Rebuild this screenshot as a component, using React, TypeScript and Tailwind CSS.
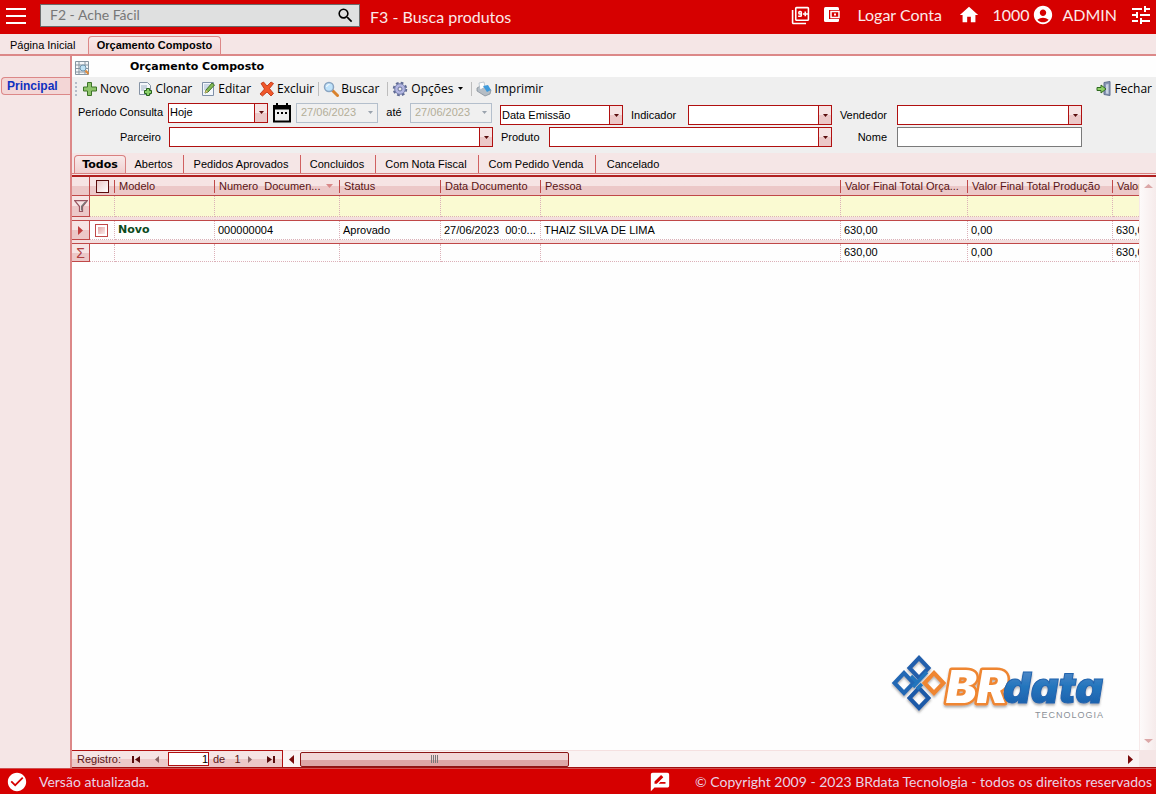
import type { ReactNode } from "react";
import {
  MdAccountCircle,
  MdCheckCircle,
  MdFilter9Plus,
  MdHome,
  MdRateReview,
  MdSearch,
  MdTune,
} from "react-icons/md";

const ui = "font-['Liberation_Sans',sans-serif] text-[11px]";
const gloss = "bg-linear-to-b from-[#f6e4e4] from-50% to-[#ecc8c8] to-50%";

const statusTabs = [
  { label: "Abertos", width: "w-[58px]" },
  { label: "Pedidos Aprovados", width: "w-[117px]" },
  { label: "Concluidos", width: "w-[75px]" },
  { label: "Com Nota Fiscal", width: "w-[103px]" },
  { label: "Com Pedido Venda", width: "w-[117px]" },
  { label: "Cancelado", width: "w-[76px]" },
];

const columns = [
  { label: "Modelo", width: "w-[100px]" },
  { label: "Numero  Documen...", width: "w-[125px]", sorted: true },
  { label: "Status", width: "w-[101px]" },
  { label: "Data Documento", width: "w-[100px]" },
  { label: "Pessoa", width: "w-[300px]" },
  { label: "Valor Final Total Orça...", width: "w-[127px]" },
  { label: "Valor Final Total Produção", width: "w-[145px]" },
  { label: "Valor", width: "", clipped: true },
];

const record = ["Novo", "000000004", "Aprovado", "27/06/2023  00:0...", "THAIZ SILVA DE LIMA", "630,00", "0,00", "630,00"];
const totals = ["", "", "", "", "", "630,00", "0,00", "630,00"];

function Combo({ id, label, options, className = "", disabled }: {
  id: string;
  label: string;
  options: string[];
  className?: string;
  disabled?: boolean;
}) {
  return (
    <div className={`relative h-5 ${className}`}>
      <select
        id={id}
        aria-label={label}
        disabled={disabled}
        className={`${ui} h-full w-full appearance-none border pr-4 ${
          disabled ? "border-[#b4bfcc] bg-[#f0f0f0] pl-1 text-[#b3ae98] opacity-100" : "border-[#b01010] bg-white pl-px text-black"
        }`}
      >
        {options.map((o) => (
          <option key={o}>{o}</option>
        ))}
      </select>
      <span
        className={`pointer-events-none absolute inset-y-px right-px flex w-[13px] items-center justify-center ${
          disabled ? "" : `border-l border-[#b01010] ${gloss}`
        }`}
      >
        <svg width="5" height="3" viewBox="0 0 5 3">
          <path d="M0 0h5L2.5 3z" fill={disabled ? "#9aa3ad" : "#5a0c0c"} />
        </svg>
      </span>
    </div>
  );
}

function ToolButton({ label, children }: { label: string; children: ReactNode }) {
  return (
    <button type="button" className="flex items-center gap-[2px] whitespace-nowrap">
      <svg width="16" height="16" viewBox="0 0 16 16">{children}</svg>
      {label}
    </button>
  );
}

function Separator() {
  return <span className="mx-1 h-[14px] w-px bg-[#bdbdbd]" />;
}

function Triangle({ points, color }: { points: string; color: string }) {
  return (
    <svg width="9" height="9" viewBox="0 0 9 9">
      <path d={points} fill={color} />
    </svg>
  );
}

function TopBar() {
  return (
    <header className="flex h-[34px] shrink-0 items-center bg-[#d60000] font-[Lato,sans-serif] text-base text-[#fbe9e9]">
      <button type="button" aria-label="Menu" className="flex w-10 flex-col gap-[5px] pb-[3px] pl-[6px]">
        <span className="h-[2px] w-5 bg-white" />
        <span className="h-[2px] w-5 bg-white" />
        <span className="h-[2px] w-5 bg-white" />
      </button>
      <div className="mb-1 flex h-[23px] w-80 items-center border border-[#6b6b6b] bg-[#dfe0e0] pl-[9px] pr-1">
        <input
          aria-label="Ache Fácil"
          placeholder="F2 - Ache Fácil"
          className="min-w-0 flex-1 bg-transparent text-sm text-black outline-none placeholder:text-[#777]"
        />
        <MdSearch className="size-[19px] text-black" />
      </div>
      <a href="#produtos" className="ml-[10px]">F3 - Busca produtos</a>
      <div className="ml-auto flex items-center pb-1">
        <MdFilter9Plus className="size-[19px] text-white" />
        <svg width="17" height="16" viewBox="0 0 17 16" className="ml-[14px]">
          <rect y="0" width="15" height="15" rx="1.500" fill="#fff" />
          <path d="M5 3h12v9H5z" fill="#d60000" />
          <path d="M7 4.500h8v6H7z" fill="none" stroke="#fff" strokeWidth="1.500" />
          <path d="M10 6.500h2v2h-2z" fill="#fff" />
        </svg>
        <a href="#conta" className="ml-4 w-[101px]">Logar Conta</a>
        <MdHome className="size-[22px] text-white" />
        <span className="ml-3 w-10">1000</span>
        <MdAccountCircle className="size-[22px] text-white" />
        <span className="ml-2">ADMIN</span>
        <MdTune className="ml-3 mr-[3px] size-6 text-white" />
      </div>
    </header>
  );
}

function Toolbar() {
  return (
    <div className="flex h-[23px] items-center bg-[#efefef] pl-[3px] pr-1 font-['Open_Sans',sans-serif] text-xs text-black">
      <span className="mr-[5px] h-[14px] border-l-2 border-dotted border-[#b5bcc8]" />
      <div className="flex items-center gap-2">
        <ToolButton label="Novo">
          <path d="M5.500 1.500h4v4.500h5v4h-5v4.500h-4V10h-4V6h4z" fill="#8fc46c" stroke="#3c7427" />
        </ToolButton>
        <ToolButton label="Clonar">
          <path d="M2.500 1.500h8l3 3v9h-11z" fill="#f5f7fa" stroke="#8593a5" />
          <path d="M4 5h6M4 7h6M4 9h3" stroke="#9fb0c4" />
          <path d="M9.500 7.500h3v2h2v3h-2v2h-3v-2h-2v-3h2z" fill="#8bd06a" stroke="#26611c" />
        </ToolButton>
        <ToolButton label="Editar">
          <path d="M2.500 1.500h11v13h-11z" fill="#f3f6fb" stroke="#7f90a8" />
          <path d="M4 4h6M4 6h5M4 8h4" stroke="#a4b7d0" />
          <path d="M5 12l1-3 6-7 2.500 2L8 11z" fill="#83b954" stroke="#40722c" />
          <path d="M5 12l1-3 2 2z" fill="#e7c37a" />
        </ToolButton>
        <ToolButton label="Excluir">
          <path d="M2 2.500L4.500 1 8 5l4-4 2.500 1.500L10.500 7.500l4 5L12 15l-4-4-4.500 4L1 13l4.500-5z" fill="#f0572a" stroke="#b82c0d" strokeWidth=".8" />
        </ToolButton>
      </div>
      <Separator />
      <ToolButton label="Buscar">
        <path d="M9.500 9.500l5 5" stroke="#d9822e" strokeWidth="3" strokeLinecap="round" />
        <circle cx="6" cy="6" r="4.500" fill="#bfe3fb" stroke="#8aa5c2" strokeWidth="1.500" />
        <path d="M3.500 6a3 3 0 0 1 3-2.500" stroke="#fff" fill="none" />
      </ToolButton>
      <span className="w-1" />
      <Separator />
      <button type="button" className="flex items-center gap-[3px]">
        <svg width="16" height="16" viewBox="0 0 16 16">
          <circle cx="8" cy="8" r="6" fill="none" stroke="#5f6a93" strokeWidth="2.500" strokeDasharray="2.600 2.110" />
          <circle cx="8" cy="8" r="5.300" fill="#b3b6e2" stroke="#7680ab" />
          <circle cx="8" cy="8" r="2" fill="#efefef" stroke="#69739c" />
        </svg>
        Opções
        <svg width="5" height="3" viewBox="0 0 5 3" className="ml-[2px]">
          <path d="M0 0h5L2.500 3z" />
        </svg>
      </button>
      <span className="w-1" />
      <Separator />
      <ToolButton label="Imprimir">
        <path d="M1 7l5-3 9 5-1 4-5 2-8-5z" fill="#b5bdc5" stroke="#7c8790" strokeWidth=".7" />
        <path d="M3 2l5-1 1 5-5 3z" fill="#fff" stroke="#a7b4c0" strokeWidth=".7" />
        <path d="M7 5l5-1 3 5-4 2z" fill="#3f9bdc" />
      </ToolButton>
      <div className="ml-auto">
        <ToolButton label="Fechar">
          <path d="M8 1.500l6-1v14l-6-1z" fill="#8795b5" stroke="#62718f" />
          <path d="M10 3.500l2.500-.5v10L10 12.500z" fill="#c9d3e4" />
          <path d="M1 6.500h4V4l5 4-5 4V9.500H1z" fill="#8fd067" stroke="#2f6a20" />
        </ToolButton>
      </div>
    </div>
  );
}

function Filters() {
  return (
    <form className={`${ui} flex flex-col gap-[2px] bg-[#efefef] pb-[6px] pt-[2px] text-black`}>
      <div className="flex h-[23px]">
        <div className="flex h-[21px] w-[421px] items-center">
          <label htmlFor="periodo" className="w-24 pr-[5px] text-right">Período Consulta</label>
          <Combo id="periodo" label="Período" options={["Hoje"]} className="w-[100px]" />
          <svg width="18" height="20" viewBox="0 0 18 20" className="mx-[5px]">
            <path d="M1 5.500h16v13H1z" fill="none" stroke="#000" strokeWidth="2" />
            <path d="M0 2h18v4H0zM3 0h2v3H3zM13 0h2v3h-2zM4 9h2v2H4zM8 9h2v2H8zM12 9h2v2h-2z" />
          </svg>
          <Combo id="inicio" label="Data inicial" options={["27/06/2023"]} className="w-[82px]" disabled />
          <span className="w-8 text-center">até</span>
          <Combo id="fim" label="Data final" options={["27/06/2023"]} className="w-[82px]" disabled />
        </div>
        <div className="flex h-5 items-center self-end pl-[7px]">
          <Combo id="tipo" label="Tipo de data" options={["Data Emissão"]} className="w-[123px]" />
          <label htmlFor="indicador" className="w-[65px] pl-2">Indicador</label>
          <Combo id="indicador" label="Indicador" options={[""]} className="w-36" />
          <label htmlFor="vendedor" className="w-[65px] pr-[10px] text-right">Vendedor</label>
          <Combo id="vendedor" label="Vendedor" options={[""]} className="w-[185px]" />
        </div>
      </div>
      <div className="flex h-5 items-center">
        <label htmlFor="parceiro" className="w-[97px] pr-2 text-right">Parceiro</label>
        <Combo id="parceiro" label="Parceiro" options={[""]} className="w-[324px]" />
        <label htmlFor="produto" className="w-14 pl-2">Produto</label>
        <Combo id="produto" label="Produto" options={[""]} className="w-[283px]" />
        <label htmlFor="nome" className="w-[65px] pr-[10px] text-right">Nome</label>
        <input id="nome" className="h-5 w-[185px] border border-[#7a7a7a] bg-white px-1" />
      </div>
    </form>
  );
}

function StatusTabs() {
  return (
    <nav className={`${ui} flex h-[21px] items-end border-b border-[#d98080] bg-[#f5e6e6] pl-[2px] text-black`}>
      <button
        type="button"
        className="h-[18px] w-[52px] rounded-t border border-b-0 border-[#d98080] bg-linear-to-b from-[#f8eaea] to-[#f0cfcf] font-['DejaVu_Sans',sans-serif] font-bold leading-4"
      >
        Todos
      </button>
      {statusTabs.map((tab, i) => (
        <button
          key={tab.label}
          type="button"
          className={`h-[18px] pr-[2px] ${tab.width} ${i < statusTabs.length - 1 ? "border-r border-[#d06060]" : ""}`}
        >
          {tab.label}
        </button>
      ))}
    </nav>
  );
}

function RowHead({ children }: { children?: ReactNode }) {
  return (
    <th className={`border-b border-r border-[#c04848] p-0 ${gloss}`}>
      <div className="flex items-center justify-center">{children}</div>
    </th>
  );
}

const cell = "overflow-hidden border-b border-r border-dotted border-[#dcb0b8] p-0 pl-[3px] last:border-r-0";

function Divider() {
  return (
    <tr>
      <td colSpan={10} className="h-1 border-b border-[#c04848] bg-[#f3dede] p-0" />
    </tr>
  );
}

function Grid() {
  return (
    <table className={`${ui} w-full table-fixed border-separate border-spacing-0 whitespace-pre text-black`}>
      <thead>
        <tr className={`h-[19px] text-[#5a1414] ${gloss}`}>
          <th className="w-[18px] border-b border-r border-[#c04848] p-0" />
          <th className="w-[25px] border-b border-[#c04848] p-0">
            <div className="flex h-[13px] items-center justify-center border-r border-[#c04848]">
              <input type="checkbox" aria-label="Selecionar todos" className="size-[13px] appearance-none border border-[#5a0c0c] bg-linear-to-br from-[#e8c8c8] to-white" />
            </div>
          </th>
          {columns.map((col) => (
            <th key={col.label} className={`${col.width} overflow-hidden border-b border-[#c04848] p-0 text-left font-normal`}>
              <div className={`flex h-[13px] items-center border-[#c04848] pl-1 ${col.clipped ? "" : "border-r"}`}>
                <span>{col.label}</span>
                {col.sorted && (
                  <svg width="7" height="4" viewBox="0 0 7 4" className="ml-auto mr-[6px] shrink-0">
                    <path d="M0 0h7L3.500 4z" fill="#d98888" />
                  </svg>
                )}
              </div>
            </th>
          ))}
        </tr>
      </thead>
      <tbody>
        <tr className="h-[21px] bg-[#fafad2]">
          <RowHead>
            <svg width="14" height="12" viewBox="0 0 14 12">
              <path d="M.7.7h12.600L8.500 6.500v5h-3v-5z" fill="#f6e4e4" stroke="#9a5560" strokeWidth="1.200" />
              <path d="M13.300.7L8.500 6.500v5L7 10V6l3.500-4z" fill="#777" />
            </svg>
          </RowHead>
          {Array.from({ length: 9 }, (_, i) => (
            <td key={i} className={cell} />
          ))}
        </tr>
        <Divider />
        <tr className="h-[19px]">
          <RowHead>
            <Triangle points="M2 0v9l5-4.500z" color="#c04040" />
          </RowHead>
          <td className={cell}>
            <input type="checkbox" aria-label="Selecionar Novo" className="ml-[2px] block size-[13px] appearance-none border border-[#c04848] bg-linear-to-br from-[#d99090] to-white outline-2 -outline-offset-3 outline-white" />
          </td>
          {record.map((value, i) => (
            <td key={i} className={`${cell} ${i === 0 ? "font-['DejaVu_Sans',sans-serif] font-bold text-[#0b4a1c]" : ""}`}>
              {value}
            </td>
          ))}
        </tr>
        <Divider />
        <tr className="h-[18px]">
          <RowHead>
            <span className="font-['Liberation_Sans',sans-serif] text-sm font-normal leading-4 text-[#b04040]">Σ</span>
          </RowHead>
          <td className={cell} />
          {totals.map((value, i) => (
            <td key={i} className={cell}>{value}</td>
          ))}
        </tr>
      </tbody>
    </table>
  );
}

function Logo() {
  return (
    <svg width="216" height="68" viewBox="0 0 216 68" role="img" aria-label="BRdata Tecnologia">
      <defs>
        <linearGradient id="blue" x1="0" y1="0" x2="0" y2="1">
          <stop offset="0" stopColor="#6a93cc" />
          <stop offset=".5" stopColor="#2375bd" />
          <stop offset="1" stopColor="#1a57a4" />
        </linearGradient>
        <filter id="shade" x="-10%" y="-10%" width="120%" height="130%">
          <feDropShadow dx="0" dy="2" stdDeviation="1" floodColor="#555" floodOpacity=".45" />
        </filter>
      </defs>
      <g filter="url(#shade)" fill="none" strokeWidth="4">
        <path d="M43 19l9.500 10L43 39 33.500 29z" stroke="#ef8630" />
        <path d="M28 4l9.500 10L28 24l-9.500-10z" stroke="#215fac" />
        <path d="M13 19l9.500 10L13 39 3.500 29z" stroke="#2468b4" />
        <path d="M28 34l9.500 10L28 54l-9.500-10z" stroke="#1f5aa8" />
        <path d="M20 22l6 6M36 18L22 33M26 35l5-5" stroke="#2375bd" strokeWidth="3.500" />
      </g>
      <g fontFamily="Inter, sans-serif" fontStyle="italic" fontWeight="900" filter="url(#shade)">
        <text x="55" y="49" fontSize="46" fill="#fff" stroke="#ef8630" strokeWidth="5" strokeLinejoin="round" paintOrder="stroke">BR</text>
        <text x="112" y="49" fontSize="43" fill="url(#blue)" stroke="#2064ae" strokeWidth="1">data</text>
      </g>
      <text x="144" y="64" fontFamily="Liberation Sans, sans-serif" fontSize="9" letterSpacing="1" fill="#8a9097">TECNOLOGIA</text>
    </svg>
  );
}

function RecordNavigator() {
  return (
    <div className={`${ui} flex h-[18px] border-b border-[#a01010] bg-[#faf3f3] text-[#5a1414]`}>
      <div className={`flex w-[211px] items-center border border-b-0 border-l-0 border-[#b01010] pl-[5px] ${gloss}`}>
        <label htmlFor="registro" className="w-[55px]">Registro:</label>
        <button type="button" aria-label="Primeiro" className="w-5">
          <Triangle points="M0 1h2v7H0zM8 1v7L3 4.500z" color="#5a0c0c" />
        </button>
        <button type="button" aria-label="Anterior" className="w-4">
          <Triangle points="M7 1v7L3 4.500z" color="#8a6464" />
        </button>
        <input id="registro" defaultValue="1" className="h-[14px] w-[41px] border border-[#b01010] bg-white text-right text-black" />
        <span className="w-9 whitespace-pre pl-1">de   1</span>
        <button type="button" aria-label="Próximo" className="w-[22px]">
          <Triangle points="M3 1v7l4-3.500z" color="#8a6464" />
        </button>
        <button type="button" aria-label="Último">
          <Triangle points="M0 1v7l5-3.500zM6 1h2v7H6z" color="#5a0c0c" />
        </button>
      </div>
      <div className="flex flex-1 items-center border-t border-[#f5e0e0]">
        <span className="flex w-[17px] justify-center">
          <Triangle points="M7 0v9L2 4.500z" color="#7a0c0c" />
        </span>
        <span className="flex h-[15px] w-[269px] items-center justify-center gap-px rounded-xs border border-[#8b1515] bg-linear-to-b from-[#f2d6d6] from-50% to-[#dea6a6] to-50%">
          <i className="h-2 w-px bg-[#777]" />
          <i className="h-2 w-px bg-[#777]" />
          <i className="h-2 w-px bg-[#777]" />
          <i className="h-2 w-px bg-[#777]" />
        </span>
        <span className="ml-auto mr-1">
          <Triangle points="M2 0v9l5-4.500z" color="#7a0c0c" />
        </span>
      </div>
      <span className="w-[17px] bg-[#f5e6e6]" />
    </div>
  );
}

export default function App() {
  return (
    <div className="flex min-h-screen flex-col bg-[#f5e6e6]">
      <TopBar />
      <nav className={`${ui} flex h-[22px] items-end border-b-2 border-[#dc8888] text-black`}>
        <a href="#inicio" className="flex h-[18px] w-[88px] items-center pl-[10px]">Página Inicial</a>
        <a
          href="#orcamento"
          className="flex h-[18px] w-[133px] items-center justify-center rounded-t border border-b-0 border-[#dc8888] bg-linear-to-b from-[#f8eaea] to-[#f3d6d6] font-bold"
        >
          Orçamento Composto
        </a>
      </nav>
      <div className="flex flex-1">
        <aside className="w-[70px] shrink-0 pl-px pt-[21px]">
          <a
            href="#principal"
            className="flex h-[18px] items-center rounded-l border border-r-0 border-[#dc8888] bg-[#f3d6d6] pl-[5px] font-['Liberation_Sans',sans-serif] text-xs font-bold text-[#1030c0]"
          >
            Principal
          </a>
        </aside>
        <main className="flex min-w-0 flex-1 flex-col border-l-2 border-[#dc8888]">
          <div className="flex h-[21px] items-center bg-[#fefefe] pl-[3px] pt-[2px]">
            <svg width="14" height="14" viewBox="0 0 14 14" className="mr-[41px]">
              <path d="M.5.5h13v13H.5zM.5 4h13M.5 7.500h13M.5 11h13M4 .5v13M10 .5v13" fill="#f4f6f8" stroke="#8795a0" />
              <circle cx="8" cy="7" r="3" fill="#bfe2f5" stroke="#6f94ac" />
              <path d="M10.500 9.500l3 3.500" stroke="#df8a3a" strokeWidth="2" />
            </svg>
            <h1 className="font-['DejaVu_Sans',sans-serif] text-[11px] font-bold text-black">Orçamento Composto</h1>
          </div>
          <Toolbar />
          <Filters />
          <StatusTabs />
          <section className="mt-px flex flex-1 flex-col border-t-2 border-[#b02020] bg-[#fefefe]">
            <div className="flex flex-1">
              <div className="flex min-w-0 flex-1 flex-col justify-between overflow-hidden">
                <Grid />
                <div className="flex justify-end pb-7 pr-8">
                  <Logo />
                </div>
              </div>
              <div className="flex w-[17px] flex-col items-center justify-between border-l border-[#f7eaea] bg-linear-to-r from-[#fdfafa] to-[#f6ebeb] py-1">
                <Triangle points="M0 7h9L4.500 3z" color="#dca8a8" />
                <Triangle points="M0 2h9L4.500 6z" color="#dca8a8" />
              </div>
            </div>
            <RecordNavigator />
          </section>
        </main>
      </div>
      <footer className="flex h-[26px] shrink-0 items-center border-t border-[#d05050] bg-[#d60000] pl-[6px] pr-1 font-[Lato,sans-serif] text-sm text-[#e9d3e6]">
        <MdCheckCircle className="size-[22px] text-white" />
        <span className="ml-[11px]">Versão atualizada.</span>
        <MdRateReview className="ml-auto size-[22px] text-white" />
        <span className="ml-6">© Copyright 2009 - 2023 BRdata Tecnologia - todos os direitos reservados</span>
      </footer>
    </div>
  );
}
